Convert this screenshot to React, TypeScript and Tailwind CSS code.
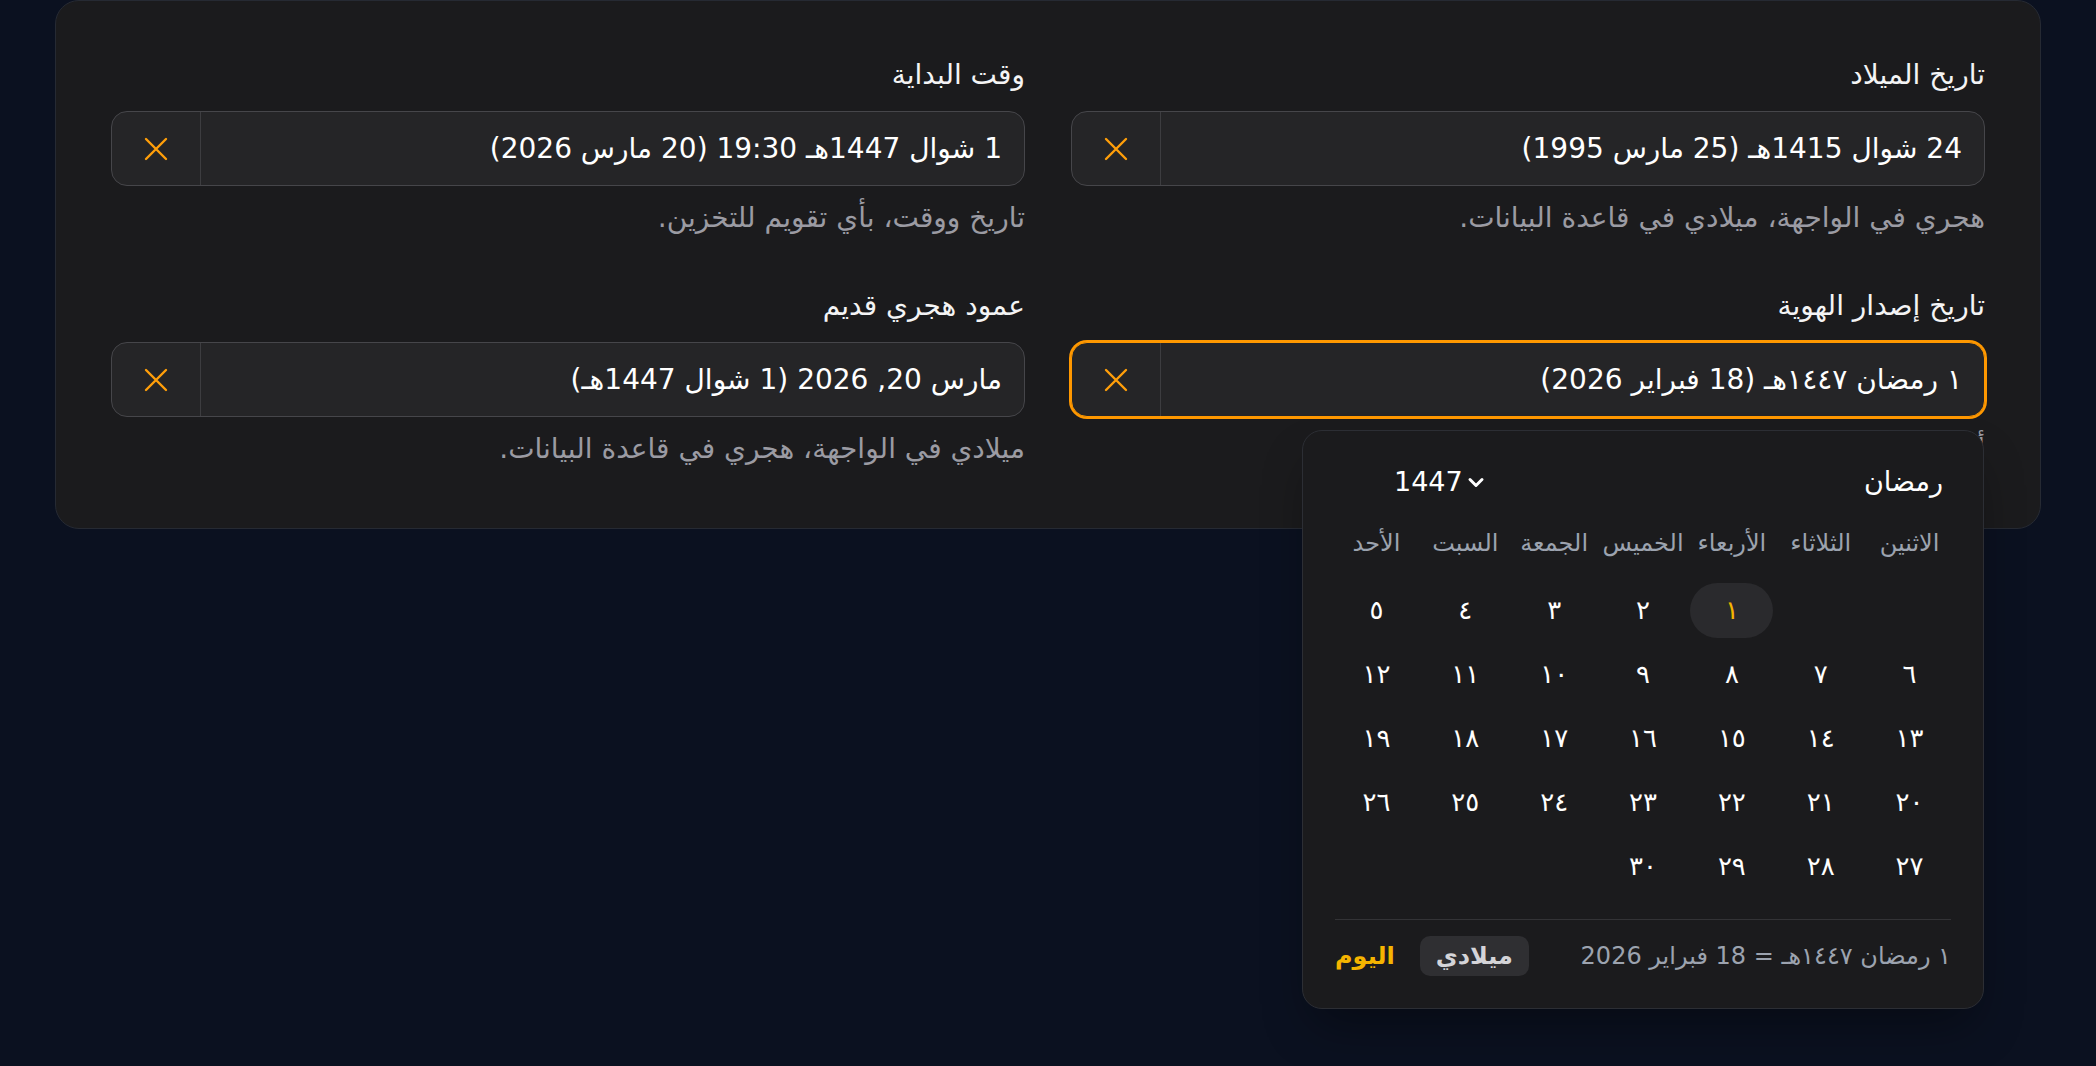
import { useState } from "react";

type Field = {
  label: string;
  value: string;
  hint: string;
  active?: boolean;
};

const fields: Field[] = [
  {
    label: "تاريخ الميلاد",
    value: "24 شوال 1415هـ (25 مارس 1995)",
    hint: "هجري في الواجهة، ميلادي في قاعدة البيانات.",
  },
  {
    label: "وقت البداية",
    value: "1 شوال 1447هـ 19:30 (20 مارس 2026)",
    hint: "تاريخ ووقت، بأي تقويم للتخزين.",
  },
  {
    label: "تاريخ إصدار الهوية",
    value: "١ رمضان ١٤٤٧هـ (18 فبراير 2026)",
    hint: "أم القرى في الواجهة، ميلادي في قاعدة البيانات.",
    active: true,
  },
  {
    label: "عمود هجري قديم",
    value: "مارس 20, 2026 (1 شوال 1447هـ)",
    hint: "ميلادي في الواجهة، هجري في قاعدة البيانات.",
  },
];

const weekdays = ["الاثنين", "الثلاثاء", "الأربعاء", "الخميس", "الجمعة", "السبت", "الأحد"];

const arabicDigits = "٠١٢٣٤٥٦٧٨٩";
const toArabic = (n: number) =>
  String(n)
    .split("")
    .map((d) => arabicDigits[Number(d)])
    .join("");

function ClearIcon() {
  return (
    <svg width="24" height="24" viewBox="0 0 24 24" fill="none" stroke="#ff9f0a" strokeWidth="2.4" strokeLinecap="round">
      <path d="M2 2 22 22M22 2 2 22" />
    </svg>
  );
}

function Chevron() {
  return (
    <svg width="18" height="14" viewBox="0 0 18 14" fill="none" stroke="white" strokeWidth="3" strokeLinecap="round" strokeLinejoin="round">
      <path d="M3 4.5 9 10.5l6-6" />
    </svg>
  );
}

function HijriCalendar() {
  const [selected, setSelected] = useState(1);
  // Ramadan 1447 starts on a Wednesday: two empty cells before day 1
  const cells: (number | null)[] = [null, null, ...Array.from({ length: 30 }, (_, i) => i + 1)];

  return (
    <div className="absolute right-0 top-[calc(100%+14px)] z-10 w-[682px] rounded-[20px] border border-[#2c2e34] bg-[#1b1b1d] px-[32px] pb-[32px] pt-[31px] shadow-2xl shadow-black/40">
      <div className="flex h-[40px] items-center justify-between pl-[59px] pr-[8px]">
        <span className="text-[27px] text-white">رمضان</span>
        <button type="button" dir="ltr" className="flex items-center gap-[4px] text-[27px] text-white">
          1447
          <Chevron />
        </button>
      </div>

      <div className="-mx-[3px] mt-[21px] grid h-[40px] grid-cols-7 items-center text-center text-[24px] text-[#9ca3af]">
        {weekdays.map((day) => (
          <span key={day}>{day}</span>
        ))}
      </div>

      <div className="-mx-[3px] mt-[20px] grid grid-cols-7 gap-y-[9px]">
        {cells.map((day, index) =>
          day === null ? (
            <span key={`empty-${index}`} />
          ) : (
            <button
              key={day}
              type="button"
              onClick={() => setSelected(day)}
              className={`mx-[3px] h-[55px] rounded-full text-[26px] ${
                selected === day ? "bg-[#2a2a2d] text-[#f5b400]" : "text-white"
              }`}
            >
              {toArabic(day)}
            </button>
          ),
        )}
      </div>

      <div className="mt-[25px] flex items-center justify-between border-t border-[#333336] pt-[16px]">
        <span className="text-[24px] text-[#9ca3af]">١ رمضان ١٤٤٧هـ = 18 فبراير 2026</span>
        <div className="flex items-center gap-[25px]">
          <button type="button" className="h-[40px] rounded-[10px] bg-[#2f2f32] px-[16px] text-[24px] font-bold text-[#d4d4d8]">
            ميلادي
          </button>
          <button type="button" className="text-[24px] font-bold text-[#f5b400]">
            اليوم
          </button>
        </div>
      </div>
    </div>
  );
}

function DateField({ field }: { field: Field }) {
  return (
    <div>
      <label className="block text-[28px] leading-[36px] text-[#f4f4f5]">{field.label}</label>
      <div
        className={`relative mt-[18px] flex h-[75px] rounded-2xl border bg-[#252527] ${
          field.active ? "z-10 border-[#ff9800] ring-2 ring-[#ff9800]" : "border-[#46464a]"
        }`}
      >
        <div className="flex flex-1 items-center pr-[22px] text-[28px] text-white">{field.value}</div>
        <button type="button" className="flex w-[89px] items-center justify-center border-r border-[#3d3d40]">
          <ClearIcon />
        </button>
        {field.active ? <HijriCalendar /> : null}
      </div>
      <p className="mt-[14px] text-[28px] leading-[36px] text-[#9b9ba3]">{field.hint}</p>
    </div>
  );
}

export default function App() {
  return (
    <div dir="rtl" className="min-h-screen bg-[#0b1120] px-[55px] font-['DejaVu_Sans',sans-serif]">
      <div className="rounded-3xl border border-[#262a33] bg-[#1b1b1d] px-[55px] pb-[61px] pt-[56px]">
        <div className="grid grid-cols-2 gap-x-[46px] gap-y-[52px]">
          {fields.map((field) => (
            <DateField key={field.label} field={field} />
          ))}
        </div>
      </div>
    </div>
  );
}
